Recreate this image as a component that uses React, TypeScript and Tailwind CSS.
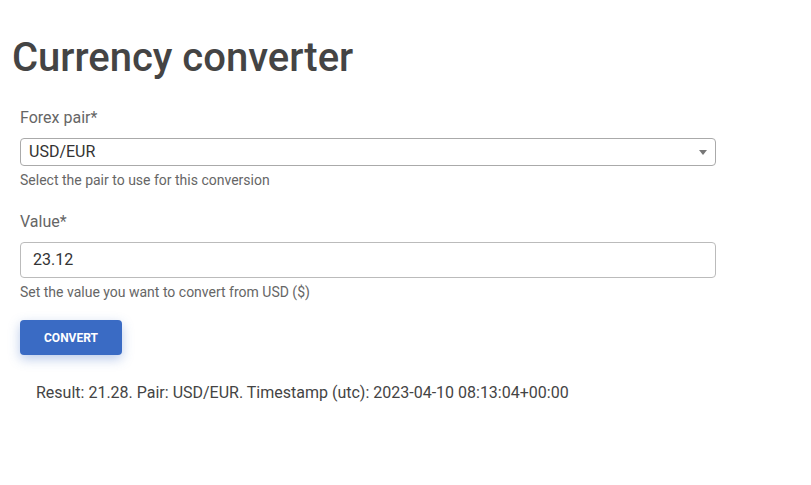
import React from "react";

export default function App() {
  return (
    <div className="w-[811px] h-[485px] bg-white text-[#333]" style={{ fontFamily: "Roboto, 'Noto Sans', sans-serif" }}>
      <div className="pl-[12px] pt-[34px]">
        <h1 className="text-[40px] leading-[48px] font-medium text-[#444]">Currency converter</h1>
      </div>
      <div className="pl-[20px] pr-[95px] pt-[26px]">
        <div className="text-[16px] leading-[20px] text-[#666]">Forex pair*</div>
        <div className="mt-[10px] h-[28px] border border-[#aaa] rounded-[4px] flex items-center justify-between pl-[8px] pr-[8px]">
          <span className="text-[16px] text-[#333]">USD/EUR</span>
          <svg width="8" height="5" viewBox="0 0 8 5"><path d="M0 0 L8 0 L4 5 Z" fill="#777" /></svg>
        </div>
        <div className="mt-[5px] text-[14px] leading-[18px] text-[#666]">Select the pair to use for this conversion</div>

        <div className="mt-[23px] text-[16px] leading-[20px] text-[#666]">Value*</div>
        <div className="mt-[10px] h-[36px] border border-[#bbb] rounded-[4px] flex items-center pl-[12px]">
          <span className="text-[16px] text-[#333]">23.12</span>
        </div>
        <div className="mt-[5px] text-[14px] leading-[18px] text-[#666]">Set the value you want to convert from USD ($)</div>

        <button className="mt-[19px] w-[102px] h-[35px] rounded-[4px] bg-[#3a6bc4] text-white text-[12px] font-bold shadow-[0_4px_12px_rgba(58,107,196,0.35)]">CONVERT</button>

        <div className="mt-[28px] pl-[16px] text-[16px] leading-[20px] text-[#444]">Result: 21.28. Pair: USD/EUR. Timestamp (utc): 2023-04-10 08:13:04+00:00</div>
      </div>
    </div>
  );
}
